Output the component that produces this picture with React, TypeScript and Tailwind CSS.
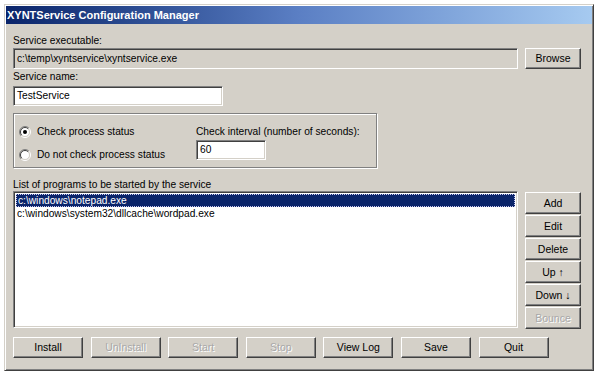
import React from 'react';

const font = { fontFamily: '"Liberation Sans", Arial, sans-serif' };

const Btn = ({ label, disabled, className = '' }: { label: string; disabled?: boolean; className?: string }) => (
  <div
    className={`flex items-center justify-center bg-[#d4d0c8] border border-t-white border-l-white border-r-[#404040] border-b-[#404040] shadow-[inset_-1px_-1px_0_#808080] text-[10.5px] leading-none ${
      disabled ? 'text-[#a8a8a8] [text-shadow:1px_1px_0_#fff]' : 'text-black'
    } ${className}`}
  >
    {label}
  </div>
);

const Radio = ({ checked }: { checked?: boolean }) => (
  <svg width="12" height="12" viewBox="0 0 12 12" className="shrink-0">
    <circle cx="6" cy="6" r="4.5" fill="#fff" />
    <path d="M2.1 9.9A5.5 5.5 0 0 1 9.9 2.1" fill="none" stroke="#808080" />
    <path d="M9.9 2.1A5.5 5.5 0 0 1 2.1 9.9" fill="none" stroke="#fff" />
    <path d="M2.8 9.2A4.5 4.5 0 0 1 9.2 2.8" fill="none" stroke="#404040" />
    <path d="M9.2 2.8A4.5 4.5 0 0 1 2.8 9.2" fill="none" stroke="#d4d0c8" />
    {checked && <circle cx="6" cy="6" r="2" fill="#000" />}
  </svg>
);

const sunken =
  'border border-t-[#808080] border-l-[#808080] border-b-white border-r-white shadow-[inset_1px_1px_0_#404040,inset_-1px_-1px_0_#d4d0c8]';

export default function App() {
  return (
    <div className="w-[600px] h-[376px] bg-white pt-[4px] pl-[4px] overflow-hidden" style={font}>
      <div className="w-[590px] h-[367px] bg-[#d4d0c8] border border-t-[#d4d0c8] border-l-[#d4d0c8] border-r-[#404040] border-b-[#404040] shadow-[inset_1px_1px_0_#fff,inset_-1px_-1px_0_#808080] p-[1px] flex flex-col">
        {/* title bar */}
        <div className="h-[18px] bg-linear-to-r from-[#0a246a] via-[#5b7fc4] to-[#a6caf0] flex items-center pl-[1px]">
          <span className="text-white font-bold text-[11px] leading-none">XYNTService Configuration Manager</span>
        </div>

        <div className="flex flex-col pl-[7px] text-[10.2px] text-black">
          <div className="mt-[10px] h-[13px] leading-[13px]">Service executable:</div>
          <div className="mt-[1px] flex gap-[7px]">
            <div className={`w-[505px] h-[21px] bg-[#d4d0c8] flex items-center pl-[3px] ${sunken}`}>
              c:\temp\xyntservice\xyntservice.exe
            </div>
            <Btn label="Browse" className="w-[56px] h-[21px]" />
          </div>

          <div className="mt-[1px] h-[13px] leading-[13px]">Service name:</div>
          <div className={`mt-[3px] w-[210px] h-[20px] bg-white flex items-center pl-[3px] ${sunken}`}>TestService</div>

          {/* group box */}
          <div className="mt-[7px] w-[364px] h-[55px] border border-[#808080] shadow-[1px_1px_0_#fff,inset_1px_1px_0_#fff] flex">
            <div className="w-[177px] flex flex-col pl-[5px] pt-[11px] gap-[10px]">
              <div className="flex items-center gap-[6px] h-[13px]">
                <Radio checked />
                <span>Check process status</span>
              </div>
              <div className="flex items-center gap-[6px] h-[13px]">
                <Radio />
                <span>Do not check process status</span>
              </div>
            </div>
            <div className="flex flex-col pl-[5px] pt-[11px]">
              <div className="h-[13px] leading-[13px]">Check interval (number of seconds):</div>
              <div className={`mt-[2px] w-[70px] h-[20px] bg-white flex items-center pl-[3px] ${sunken}`}>60</div>
            </div>
          </div>

          <div className="mt-[10px] h-[13px] leading-[13px]">List of programs to be started by the service</div>
          <div className="flex gap-[7px]">
            <div className={`w-[505px] h-[137px] bg-white p-[2px] flex flex-col ${sunken}`}>
              <div className="h-[13px] leading-[11px] bg-[#0a246a] text-white pl-[1px] border border-dotted border-[#c8c8f0]">
                c:\windows\notepad.exe
              </div>
              <div className="h-[13px] leading-[13px] pl-[1px]">c:\windows\system32\dllcache\wordpad.exe</div>
            </div>
            <div className="flex flex-col gap-[1px] pt-[1px]">
              <Btn label="Add" className="w-[56px] h-[22px]" />
              <Btn label="Edit" className="w-[56px] h-[22px]" />
              <Btn label="Delete" className="w-[56px] h-[22px]" />
              <Btn label="Up ↑" className="w-[56px] h-[22px]" />
              <Btn label="Down ↓" className="w-[56px] h-[22px]" />
              <Btn label="Bounce" disabled className="w-[56px] h-[22px]" />
            </div>
          </div>

          <div className="mt-[8px] flex gap-[7.6px]">
            <Btn label="Install" className="w-[70px] h-[21px]" />
            <Btn label="UnInstall" disabled className="w-[70px] h-[21px]" />
            <Btn label="Start" disabled className="w-[70px] h-[21px]" />
            <Btn label="Stop" disabled className="w-[70px] h-[21px]" />
            <Btn label="View Log" className="w-[70px] h-[21px]" />
            <Btn label="Save" className="w-[70px] h-[21px]" />
            <Btn label="Quit" className="w-[70px] h-[21px]" />
          </div>
        </div>
      </div>
    </div>
  );
}
